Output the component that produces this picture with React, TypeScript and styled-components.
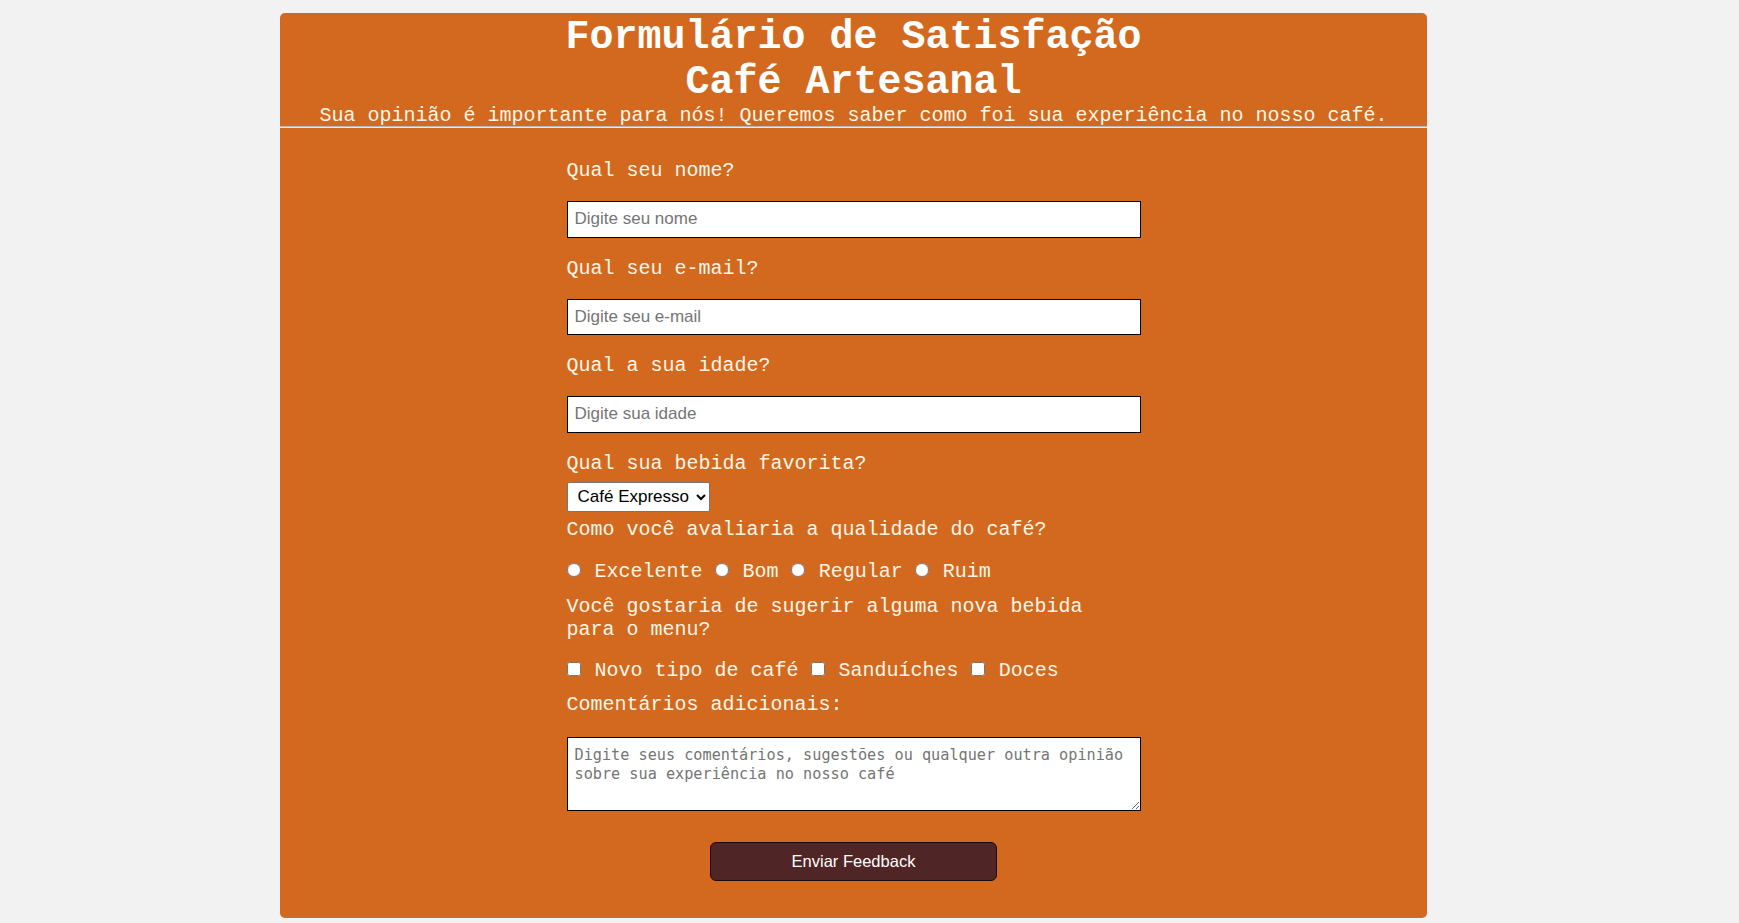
import React from "react";
import styled, { createGlobalStyle } from "styled-components";

const GlobalStyle = createGlobalStyle`
  html, body {
    margin: 0;
    padding: 0;
    background: #f2f2f2;
  }
  body {
    font-family: "Liberation Mono", "Courier New", monospace;
  }
  * { box-sizing: border-box; }
`;

const Card = styled.main`
  width: 1147px;
  margin: 13px 0 0 280px;
  padding-top: 2px;
  padding-bottom: 36.5px;
  background: #d2691e;
  border-radius: 5px;
  color: #fdf6e8;
`;

const Header = styled.header`
  text-align: center;
`;

const Title = styled.h1`
  margin: 0;
  font-family: "Liberation Mono", "Courier New", monospace;
  font-weight: 700;
  font-size: 40px;
  line-height: 45px;
  color: #ffffff;
`;

const Subtitle = styled.p`
  margin: 0;
  font-size: 20px;
  line-height: 21px;
`;

const Divider = styled.hr`
  margin: 0;
  border: none;
  border-top: 1px solid #b9b9b9;
  border-bottom: 1px solid #e6e6e6;
  height: 0;
`;

const Form = styled.form`
  width: 574px;
  margin: 0 auto;
  padding-top: 31px;
  display: flex;
  flex-direction: column;
`;

const Label = styled.label<{ $gap?: number }>`
  display: block;
  font-size: 20px;
  line-height: 23px;
  margin-top: ${(p) => p.$gap ?? 0}px;
`;

const TextInput = styled.input`
  display: block;
  width: 100%;
  height: 36.5px;
  margin: 19px 0 0;
  padding: 0 7px;
  border: 1px solid #000;
  border-radius: 0;
  background: #fff;
  font-family: "Liberation Sans", Arial, sans-serif;
  font-size: 17px;
  color: #222;
  &::placeholder {
    color: #757575;
  }
`;

const Select = styled.select`
  align-self: flex-start;
  width: 143px;
  height: 30px;
  margin-top: 7px;
  padding: 0 2px 0 6px;
  border: 1px solid #767676;
  border-radius: 2px;
  background: #fff;
  color: #000;
  font-family: "Liberation Sans", Arial, sans-serif;
  font-size: 17px;
`;

const OptionRow = styled.div<{ $gap: number }>`
  font-size: 20px;
  line-height: 23px;
  margin-top: ${(p) => p.$gap}px;
`;

const Choice = styled.input<{ $drop: number }>`
  width: 14px;
  height: 14px;
  margin: 0 2px ${(p) => p.$drop}px 0;
  vertical-align: baseline;
  accent-color: #ffffff;
`;

const TextArea = styled.textarea`
  display: block;
  width: 100%;
  height: 73.5px;
  margin-top: 21px;
  padding: 8px 7px 4px;
  border: 1px solid #000;
  border-radius: 0;
  background: #fff;
  font-family: "DejaVu Sans Mono", "Liberation Mono", monospace;
  font-size: 15.2px;
  line-height: 19px;
  resize: vertical;
  &::placeholder {
    color: #757575;
  }
`;

const SubmitButton = styled.button`
  align-self: center;
  width: 287px;
  height: 39px;
  margin-top: 31.5px;
  background: #4f2525;
  color: #ffffff;
  border: 1px solid #1a0a0a;
  border-radius: 6px;
  font-family: "Liberation Sans", Arial, sans-serif;
  font-size: 16.5px;
  cursor: pointer;
`;

const ratings = ["Excelente", "Bom", "Regular", "Ruim"];
const suggestions = ["Novo tipo de café", "Sanduíches", "Doces"];

export default function App() {
  return (
    <>
      <GlobalStyle />
      <Card>
        <Header>
          <Title>
            Formulário de Satisfação
            <br />
            Café Artesanal
          </Title>
          <Subtitle>
            Sua opinião é importante para nós! Queremos saber como foi sua experiência no nosso café.
          </Subtitle>
        </Header>
        <Divider />
        <Form onSubmit={(e) => e.preventDefault()}>
          <Label htmlFor="nome">Qual seu nome?</Label>
          <TextInput id="nome" type="text" placeholder="Digite seu nome" />

          <Label htmlFor="email" $gap={19}>Qual seu e-mail?</Label>
          <TextInput id="email" type="email" placeholder="Digite seu e-mail" />

          <Label htmlFor="idade" $gap={19}>Qual a sua idade?</Label>
          <TextInput id="idade" type="number" placeholder="Digite sua idade" />

          <Label htmlFor="bebida" $gap={19}>Qual sua bebida favorita?</Label>
          <Select id="bebida" defaultValue="expresso">
            <option value="expresso">Café Expresso</option>
            <option value="cappuccino">Cappuccino</option>
            <option value="latte">Latte</option>
            <option value="cha">Chá</option>
          </Select>

          <Label $gap={6.5}>Como você avaliaria a qualidade do café?</Label>
          <OptionRow $gap={18.5}>
            {ratings.map((r, i) => (
              <React.Fragment key={r}>
                {i > 0 ? " " : null}
                <Choice type="radio" name="qualidade" id={`q-${i}`} $drop={2} />{" "}
                <label htmlFor={`q-${i}`}>{r}</label>
              </React.Fragment>
            ))}
          </OptionRow>

          <Label $gap={12}>Você gostaria de sugerir alguma nova bebida para o menu?</Label>
          <OptionRow $gap={18.5}>
            {suggestions.map((s, i) => (
              <React.Fragment key={s}>
                {i > 0 ? " " : null}
                <Choice type="checkbox" id={`s-${i}`} $drop={1} />{" "}
                <label htmlFor={`s-${i}`}>{s}</label>
              </React.Fragment>
            ))}
          </OptionRow>

          <Label htmlFor="comentarios" $gap={11}>Comentários adicionais:</Label>
          <TextArea
            id="comentarios"
            placeholder="Digite seus comentários, sugestões ou qualquer outra opinião sobre sua experiência no nosso café"
          />

          <SubmitButton type="submit">Enviar Feedback</SubmitButton>
        </Form>
      </Card>
    </>
  );
}
